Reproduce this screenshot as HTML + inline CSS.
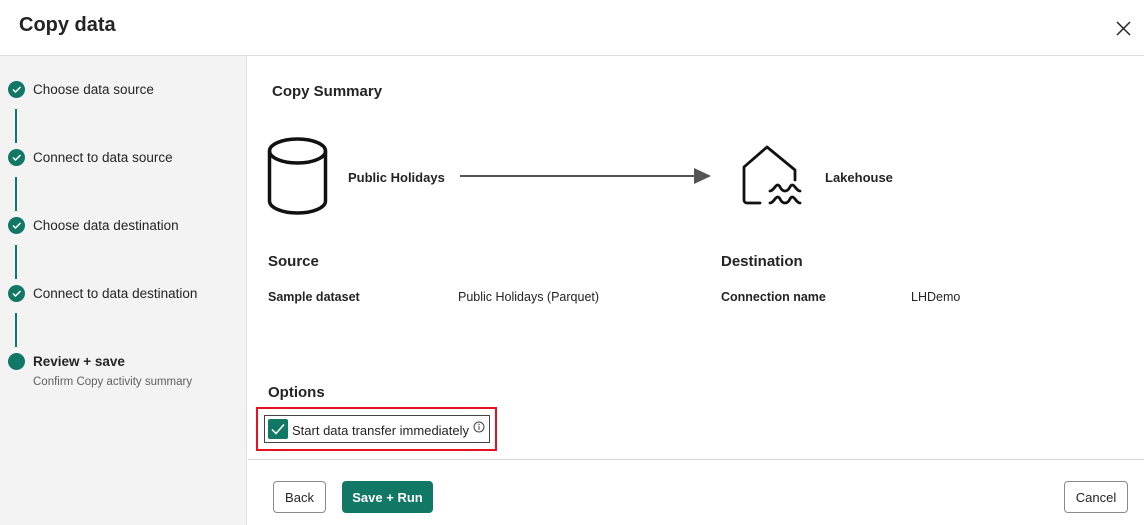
<!DOCTYPE html>
<html><head><meta charset="utf-8"><style>
*{margin:0;padding:0;box-sizing:border-box}
body{width:1144px;height:525px;overflow:hidden;background:#fff;font-family:"Segoe UI","Liberation Sans",sans-serif;color:#242424;position:relative}
.hdr{position:absolute;left:0;top:0;width:1144px;height:56px;border-bottom:1px solid #e0e0e0}
.hdr h1{position:absolute;left:19px;top:14px;font-size:20px;font-weight:600}
.side{position:absolute;left:0;top:56px;width:247px;height:469px;background:#f3f3f3;border-right:1px solid #e0e0e0}
.step{position:absolute;left:33px;font-size:13.5px;color:#242424}
.dot{position:absolute;left:8px;width:17px;height:17px;border-radius:50%;background:#117865}
.line{position:absolute;left:15px;width:2px;height:34px;background:#117865}
.t{position:absolute;font-size:13px}
.b{font-weight:600}
.btn{position:absolute;top:481px;height:32px;border:1px solid #8a8a8a;border-radius:4px;font-size:13px;display:flex;align-items:center;justify-content:center;background:#fff}
</style></head><body>
<div class="hdr"><h1>Copy data</h1>
<svg style="position:absolute;left:1116px;top:21px" width="15" height="15"><path d="M1 1L14 14M14 1L1 14" stroke="#242424" stroke-width="1.5"/></svg></div>
<div class="side">
</div>
<div class="dot" style="top:81px"></div><div class="dot" style="top:149px"></div><div class="dot" style="top:217px"></div><div class="dot" style="top:285px"></div><div class="dot" style="top:353px"></div>
<svg style="position:absolute;left:0;top:0" width="30" height="400">
<g stroke="#fff" stroke-width="1.5" fill="none"><path d="M13 89.5l2.5 2.5 5-5"/><path d="M13 157.5l2.5 2.5 5-5"/><path d="M13 225.5l2.5 2.5 5-5"/><path d="M13 293.5l2.5 2.5 5-5"/></g></svg>
<div class="line" style="top:109px"></div><div class="line" style="top:177px"></div><div class="line" style="top:245px"></div><div class="line" style="top:313px"></div>
<div class="step" style="top:82px">Choose data source</div>
<div class="step" style="top:150px">Connect to data source</div>
<div class="step" style="top:218px">Choose data destination</div>
<div class="step" style="top:286px">Connect to data destination</div>
<div class="step b" style="top:354px">Review + save</div>
<div class="step" style="top:376px;font-size:11.5px;color:#616161">Confirm Copy activity summary</div>

<div class="t b" style="left:272px;top:83px;font-size:15px">Copy Summary</div>
<svg style="position:absolute;left:260px;top:130px" width="560" height="90">
<g fill="none" stroke="#111" stroke-width="3.5"><ellipse cx="37.5" cy="21" rx="28" ry="12"/><path d="M9.5 21V71a28 12 0 0 0 56 0V21"/></g>
<path d="M200 46H436" stroke="#555" stroke-width="2"/><path d="M434 38L451 46L434 54Z" fill="#555"/>
<g fill="none" stroke="#111" stroke-width="2.8" stroke-linejoin="round" stroke-linecap="round"><path d="M500 73H487a3 3 0 0 1-3-3V37L507 17L535 40V50"/>
<path d="M510 61q2 0 5-4t5 0t5 4t5-4t5 0t5 4"/><path d="M510 73q2 0 5-4t5 0t5 4t5-4t5 0t5 4"/></g></svg>
<div class="t b" style="left:348px;top:170px">Public Holidays</div>
<div class="t b" style="left:825px;top:170px">Lakehouse</div>
<div class="t b" style="left:268px;top:253px;font-size:15px">Source</div>
<div class="t b" style="left:721px;top:253px;font-size:15px">Destination</div>
<div class="t b" style="left:268px;top:290px;font-size:12.5px">Sample dataset</div>
<div class="t" style="left:458px;top:290px;font-size:12.5px">Public Holidays (Parquet)</div>
<div class="t b" style="left:721px;top:290px;font-size:12.5px">Connection name</div>
<div class="t" style="left:911px;top:290px;font-size:12.5px">LHDemo</div>
<div class="t b" style="left:268px;top:384px;font-size:15px">Options</div>
<div style="position:absolute;left:256px;top:407px;width:241px;height:44px;border:2px solid #e81123"></div>
<div style="position:absolute;left:264px;top:415px;width:226px;height:28px;border:1px solid #444"></div>
<div style="position:absolute;left:268px;top:419px;width:20px;height:20px;background:#117865;border-radius:2px"></div>
<svg style="position:absolute;left:268px;top:419px" width="20" height="20"><path d="M4 10.5l4 4 8-9" stroke="#fff" stroke-width="1.5" fill="none"/></svg>
<div class="t" style="left:292px;top:423px;font-size:13px">Start data transfer immediately</div>
<svg style="position:absolute;left:473px;top:421px" width="12" height="12"><circle cx="6" cy="6" r="5" fill="none" stroke="#444"/><path d="M6 5v4" stroke="#444"/><circle cx="6" cy="3.5" r=".7" fill="#444"/></svg>
<div style="position:absolute;left:248px;top:459px;width:896px;height:1px;background:#d6d6d6"></div>
<div class="btn" style="left:273px;width:53px">Back</div>
<div class="btn" style="left:342px;width:91px;background:#117865;border-color:#117865;color:#fff;font-weight:600">Save + Run</div>
<div class="btn" style="left:1064px;width:64px">Cancel</div>
</body></html>
